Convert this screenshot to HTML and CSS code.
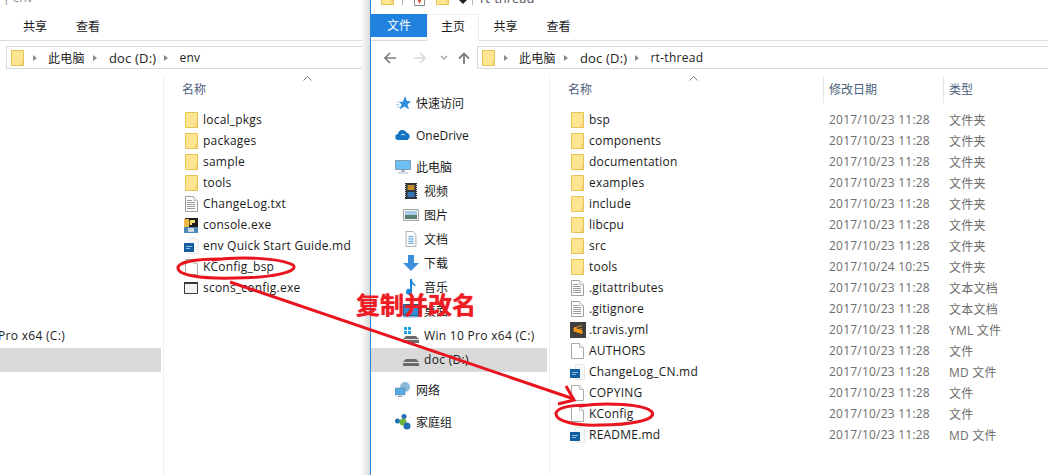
FILE: index.html
```html
<!DOCTYPE html>
<html lang="zh-CN">
<head>
    <meta charset="UTF-8">
    <title>rt-thread</title>
    <link rel="stylesheet" href="styles.css">
</head>
<body>

    <svg width="0" height="0" class="defs">
        <symbol id="folder" viewBox="0 0 18 18">
            <path d="M1.500 1.500h12v15h-12z" fill="#fde592" stroke="#e8c351"/>
            <path d="M12 12.500h1.500v4h-1.500z" fill="#fff6d2" stroke="#e8c351"/>
        </symbol>
        <symbol id="blank" viewBox="0 0 18 18">
            <path d="M1.500 1.500h8l4 4v11h-12z" fill="#fff" stroke="#a9a9a9"/>
            <path d="M9.500 1.500v4h4" fill="#f0f0f0" stroke="#c4c4c4"/>
        </symbol>
        <symbol id="text" viewBox="0 0 18 18">
            <path d="M1.500 1.500h8l4 4v11h-12z" fill="#fff" stroke="#a0a0a0"/>
            <path d="M9.500 1.500v4h4" fill="#f0f0f0" stroke="#c4c4c4"/>
            <path d="M3 5.500h5M3 7.500h8M3 9.500h8M3 11.500h8M3 13.500h8" stroke="#9a9a9a"/>
        </symbol>
        <symbol id="md" viewBox="0 0 18 18">
            <path d="M5.500 1.500h7l2 2v13h-9z" fill="#f8f8f8" stroke="#e8e8e8"/>
            <path d="M0 6h10v9h-10z" fill="#12609f"/>
            <path d="M2 9h6v1h-6zM2 11h4v1h-4z" fill="#8cbde3"/>
        </symbol>
    </svg>

    <!-- left window -->
    <section class="window window-left">
        <div class="titlebar"><span class="title">| env</span></div>
        <div class="tabs">
            <span class="tab">共享</span>
            <span class="tab">查看</span>
        </div>
        <div class="navbar">
            <div class="address">
                <svg class="addr-icon"><use href="#folder"/></svg>
                <span class="crumb-sep"></span><span>此电脑</span>
                <span class="crumb-sep"></span><span class="crumb-doc">doc (D:)</span>
                <span class="crumb-sep"></span><span>env</span>
            </div>
        </div>
        <div class="body">
            <div class="sidebar">
                <div class="side-row side-cut latin">Pro x64 (C:)</div>
                <div class="side-row side-selected"></div>
            </div>
            <div class="files">
                <div class="head">
                    <div class="col-name">名称<svg class="sort" viewBox="0 0 9 5"><path d="M.5 4.500l4-4 4 4" fill="none" stroke="#808080"/></svg></div>
                </div>
                <div class="row"><svg class="icon"><use href="#folder"/></svg>local_pkgs</div>
                <div class="row"><svg class="icon"><use href="#folder"/></svg>packages</div>
                <div class="row"><svg class="icon"><use href="#folder"/></svg>sample</div>
                <div class="row"><svg class="icon"><use href="#folder"/></svg>tools</div>
                <div class="row"><svg class="icon"><use href="#text"/></svg>ChangeLog.txt</div>
                <div class="row">
                    <svg class="icon" viewBox="0 0 18 18">
                        <path d="M1 2h13v10h-13z" fill="#1c1c1c"/>
                        <path d="M0 3h5q1 4 0 8h-5z" fill="#e9b949"/>
                        <path d="M6 4h5v3h-3v2h-2z" fill="#f6d766"/>
                        <path d="M0 11h14v6h-14z" fill="#4d87b8"/>
                        <path d="M4 12h6v4h-6z" fill="#c7d7e4"/>
                    </svg>console.exe
                </div>
                <div class="row"><svg class="icon"><use href="#md"/></svg>env Quick Start Guide.md</div>
                <div class="row"><svg class="icon"><use href="#blank"/></svg>KConfig_bsp</div>
                <div class="row">
                    <svg class="icon" viewBox="0 0 18 18">
                        <path d="M.5 3.500h13v11h-13z" fill="#f4f4f4" stroke="#3a3a3a"/>
                        <path d="M0 3h14v2h-14z" fill="#3a3a3a"/>
                    </svg>scons_config.exe
                </div>
            </div>
        </div>
    </section>

    <!-- right window -->
    <section class="window window-right">
        <div class="titlebar">
            <svg class="qa"><use href="#folder"/></svg>
            <span class="qa-line"></span>
            <svg class="qa-check" viewBox="0 0 11 6">
                <path d="M.5 0v5.500h10v-5.500" fill="#fff" stroke="#8a8a8a"/>
                <path d="M3.500 0l2 4 2-4z" fill="#d9593d"/>
            </svg>
            <svg class="qa"><use href="#folder"/></svg>
            <span class="qa-drop"></span>
            <span class="qa-line qa-line-last"></span>
            <span class="title">rt-thread</span>
        </div>
        <div class="tabs">
            <span class="tab tab-file">文件</span>
            <span class="tab tab-home">主页</span>
            <span class="tab">共享</span>
            <span class="tab">查看</span>
        </div>
        <div class="navbar">
            <svg class="nav-icon" viewBox="0 0 12 12"><path d="M12 6h-10M6 1l-5 5 5 5" fill="none" stroke="#7d7d7d" stroke-width="1.600"/></svg>
            <svg class="nav-icon nav-fwd" viewBox="0 0 12 12"><path d="M0 6h10M6 1l5 5-5 5" fill="none" stroke="#d8d8d8" stroke-width="1.600"/></svg>
            <svg class="nav-drop" viewBox="0 0 8 5"><path d="M1 1l3 3 3-3" fill="none" stroke="#9a9a9a" stroke-width="1.200"/></svg>
            <svg class="nav-icon nav-up" viewBox="0 0 12 12"><path d="M6 12v-10M1 6.500l5-5 5 5" fill="none" stroke="#7d7d7d" stroke-width="1.800"/></svg>
            <div class="address">
                <svg class="addr-icon"><use href="#folder"/></svg>
                <span class="crumb-sep"></span><span>此电脑</span>
                <span class="crumb-sep"></span><span class="crumb-doc">doc (D:)</span>
                <span class="crumb-sep"></span><span>rt-thread</span>
            </div>
        </div>
        <div class="body">
            <div class="sidebar">
                <div class="side-row top">
                    <svg class="side-icon" viewBox="0 0 16 16"><path d="M10 1l2 5h4l-3.500 3.500 1.500 5-4.500-3-5 3 2-5-2-2.500 3.500-.5z" fill="#2f8fdc"/><path d="M2 7h3M1 9.500h3M2 12h3" stroke="#9cc7ea"/></svg>
                    快速访问
                </div>
                <div class="side-row top">
                    <svg class="side-icon" viewBox="0 0 16 12"><path d="M3.500 11a3 3 0 0 1-.5-6 4.500 4.500 0 0 1 8.500-1.500 4 4 0 0 1 1 7.500z" fill="#1374c4"/><path d="M6 6q2-1.500 4 0" fill="none" stroke="#fff" stroke-width=".8"/></svg>
                    OneDrive
                </div>
                <div class="side-row pc">
                    <svg class="side-icon" viewBox="0 0 16 16"><path d="M.5 1.500h15v9h-15z" fill="#6cc0f5" stroke="#7f9db3"/><path d="M6 11h4v2h-4zM3 13.500h10v1h-10z" fill="#a8bccb"/></svg>
                    此电脑
                </div>
                <div class="side-row sub">
                    <svg class="side-icon" viewBox="0 0 16 16"><path d="M2 0h12v16h-12z" fill="#30343c"/><path d="M4.500 2h7v5h-7z" fill="#c98b2e"/><path d="M4.500 9h7v5h-7z" fill="#3273b5"/><path d="M2.500 1v14M13.500 1v14" stroke="#d0d0d0" stroke-dasharray="1 1"/></svg>
                    视频
                </div>
                <div class="side-row sub">
                    <svg class="side-icon" viewBox="0 0 16 14"><path d="M.5 1.500h15v11h-15z" fill="#f2f2f2" stroke="#a5a5a5"/><path d="M2 3h12v4h-12z" fill="#a8cbe6"/><path d="M2 7h12v4h-12z" fill="#56806f"/></svg>
                    图片
                </div>
                <div class="side-row sub">
                    <svg class="side-icon" viewBox="0 0 16 18"><path d="M2.500 .5h8l3 3v14h-11z" fill="#fff" stroke="#a5a5a5"/><path d="M5 6h6M5 8h6M5 10h6M5 12h6M5 14h6" stroke="#5e9fd2"/></svg>
                    文档
                </div>
                <div class="side-row sub">
                    <svg class="side-icon" viewBox="0 0 16 16"><path d="M5 0h6v8h5l-8 8-8-8h5z" fill="#3d8edb"/></svg>
                    下载
                </div>
                <div class="side-row sub">
                    <svg class="side-icon" viewBox="0 0 16 16"><path d="M7 0h2q0 4 4 6l-1 1q-2-1-3-2v8a3 3 0 1 1-2-3z" fill="#1b87d9"/></svg>
                    音乐
                </div>
                <div class="side-row sub">
                    <svg class="side-icon" viewBox="0 0 16 14"><path d="M.5 .5h15v11h-15z" fill="#2f8fdc" stroke="#165b8f"/><path d="M0 12h16v1.500h-16z" fill="#7fb4de"/></svg>
                    桌面
                </div>
                <div class="side-row sub latin">
                    <svg class="side-icon" viewBox="0 0 16 16"><path d="M1 0h3v3h-3zM5 0h3v3h-3zM1 4h3v3h-3zM5 4h3v3h-3z" fill="#15a7ea"/><path d="M3 9h10l3 3v4h-16v-4z" fill="#6b6b6b"/><path d="M0 12h16v1h-16z" fill="#e3e3e3"/></svg>
                    Win 10 Pro x64 (C:)
                </div>
                <div class="side-row sub latin side-selected">
                    <svg class="side-icon" viewBox="0 0 16 16"><path d="M3 8h10l3 3v4h-16v-4z" fill="#6b6b6b"/><path d="M0 11h16v1h-16z" fill="#e3e3e3"/></svg>
                    doc (D:)
                </div>
                <div class="side-row top net">
                    <svg class="side-icon" viewBox="0 0 16 16"><circle cx="10" cy="5" r="5" fill="#8ab9dc"/><path d="M0 6h10v7h-10z" fill="#56a8e3" stroke="#6d8aa0" stroke-width=".6"/><path d="M3 14h4v1h-4z" fill="#8aa0b0"/></svg>
                    网络
                </div>
                <div class="side-row top">
                    <svg class="side-icon" viewBox="0 0 16 16"><circle cx="2.500" cy="7" r="2.500" fill="#1f6db5"/><circle cx="9" cy="2.500" r="2.500" fill="#1f6db5"/><circle cx="8" cy="8" r="3.500" fill="#6fb63f"/><circle cx="12" cy="12" r="3.500" fill="#1f6db5"/></svg>
                    家庭组
                </div>
            </div>
            <div class="files">
                <div class="head">
                    <div class="col-name">名称<svg class="sort" viewBox="0 0 9 5"><path d="M.5 4.500l4-4 4 4" fill="none" stroke="#808080"/></svg></div>
                    <div class="col-date">修改日期</div>
                    <div class="col-type">类型</div>
                </div>
                <div class="row"><svg class="icon"><use href="#folder"/></svg><span class="name">bsp</span><span class="date">2017/10/23 11:28</span><span class="type">文件夹</span></div>
                <div class="row"><svg class="icon"><use href="#folder"/></svg><span class="name">components</span><span class="date">2017/10/23 11:28</span><span class="type">文件夹</span></div>
                <div class="row"><svg class="icon"><use href="#folder"/></svg><span class="name">documentation</span><span class="date">2017/10/23 11:28</span><span class="type">文件夹</span></div>
                <div class="row"><svg class="icon"><use href="#folder"/></svg><span class="name">examples</span><span class="date">2017/10/23 11:28</span><span class="type">文件夹</span></div>
                <div class="row"><svg class="icon"><use href="#folder"/></svg><span class="name">include</span><span class="date">2017/10/23 11:28</span><span class="type">文件夹</span></div>
                <div class="row"><svg class="icon"><use href="#folder"/></svg><span class="name">libcpu</span><span class="date">2017/10/23 11:28</span><span class="type">文件夹</span></div>
                <div class="row"><svg class="icon"><use href="#folder"/></svg><span class="name">src</span><span class="date">2017/10/23 11:28</span><span class="type">文件夹</span></div>
                <div class="row"><svg class="icon"><use href="#folder"/></svg><span class="name">tools</span><span class="date">2017/10/24 10:25</span><span class="type">文件夹</span></div>
                <div class="row"><svg class="icon"><use href="#text"/></svg><span class="name">.gitattributes</span><span class="date">2017/10/23 11:28</span><span class="type">文本文档</span></div>
                <div class="row"><svg class="icon"><use href="#text"/></svg><span class="name">.gitignore</span><span class="date">2017/10/23 11:28</span><span class="type">文本文档</span></div>
                <div class="row">
                    <svg class="icon" viewBox="0 0 18 18"><path d="M0 1h16v16h-16z" fill="#3f3f3f"/><path d="M12 4.500l-8 2.500v3l8 2.500v-3l-8-2.500M4 10l8-2.500" fill="#f59a1d" stroke="#f59a1d"/></svg>
                    <span class="name">.travis.yml</span><span class="date">2017/10/23 11:28</span><span class="type">YML 文件</span>
                </div>
                <div class="row"><svg class="icon"><use href="#blank"/></svg><span class="name">AUTHORS</span><span class="date">2017/10/23 11:28</span><span class="type">文件</span></div>
                <div class="row"><svg class="icon"><use href="#md"/></svg><span class="name">ChangeLog_CN.md</span><span class="date">2017/10/23 11:28</span><span class="type">MD 文件</span></div>
                <div class="row"><svg class="icon"><use href="#blank"/></svg><span class="name">COPYING</span><span class="date">2017/10/23 11:28</span><span class="type">文件</span></div>
                <div class="row"><svg class="icon"><use href="#blank"/></svg><span class="name">KConfig</span><span class="date">2017/10/23 11:28</span><span class="type">文件</span></div>
                <div class="row"><svg class="icon"><use href="#md"/></svg><span class="name">README.md</span><span class="date">2017/10/23 11:28</span><span class="type">MD 文件</span></div>
            </div>
        </div>
    </section>

    <!-- hand drawn marks on top of both windows -->
    <svg class="marks" viewBox="0 0 1048 475">
        <g fill="none" stroke="#e8141f" stroke-width="3">
            <path d="M212 260C240 256 280 258 293 265C300 272 270 278 235 278C200 279 178 275 178 268C178 262 195 259 220 259"/>
            <path d="M580 406C605 402 645 404 652 412C657 420 630 425 600 425C575 426 556 421 556 414C556 408 568 405 590 405"/>
            <path d="M230 282L574 399"/>
            <path d="M566 386L574 400L558 404"/>
        </g>
    </svg>
    <div class="label">复制并改名</div>

</body>
</html>
```

FILE: styles.css
```css
* {
    box-sizing: border-box;
}

html, body {
    margin: 0;
    height: 100%;
    overflow: hidden;
}

body {
    position: relative;
    width: 1048px;
    height: 475px;
    background: white;
    font-family: "Open Sans", "Noto Sans CJK SC", sans-serif;
    font-size: 12px;
    color: #1a1a1a;
}

.defs {
    position: absolute;
}

.window {
    position: absolute;
    top: 0;
    height: 475px;
    background: white;
}

.window-left {
    left: 0;
    width: 362px;
    overflow: hidden;
}

.window-right {
    left: 370px;
    width: 678px;
    border-left: 1px solid #2b87de;
}

.window-right::before {
    content: "";
    position: absolute;
    left: -11px;
    top: 0;
    width: 10px;
    height: 475px;
    background: linear-gradient(to right, rgba(0, 0, 0, 0), rgba(0, 0, 0, 0.14));
}

/* title strip, cut off by the top of the shot */
.titlebar {
    height: 14px;
    display: flex;
    align-items: flex-start;
    overflow: hidden;
    color: #666;
}

.title {
    line-height: 12px;
    margin: -8px 0 0 3px;
    color: #888;
    white-space: nowrap;
}

.window-right .titlebar {
    padding-left: 9px;
}

.window-right .title {
    margin: -8px 0 0 7px;
    color: #555;
    font-size: 13px;
}

.qa {
    width: 18px;
    height: 18px;
    margin-top: -12px;
    flex: none;
}

.qa-check {
    width: 11px;
    height: 6px;
    margin: 0 10px 0 0;
    flex: none;
}

.qa-line {
    width: 1px;
    height: 5px;
    background: #bbb;
    margin: 0 11px 0 4px;
}

.qa-line-last {
    margin: 0 0 0 5px;
}

.qa-drop {
    width: 8px;
    height: 4px;
    margin-left: 6px;
    background: #222;
    clip-path: polygon(0 0, 100% 0, 50% 100%);
}

.tabs {
    height: 27px;
    display: flex;
    border-bottom: 1px solid #dadada;
    padding-left: 23px;
    gap: 29px;
    line-height: 26px;
}

.window-right .tabs {
    padding-left: 0;
    gap: 0;
}

.window-right .tab {
    width: 53px;
    text-align: center;
}

.window-right .tab-file {
    width: 56px;
    height: 23px;
    line-height: 23px;
    background: #2182de;
    color: white;
}

.window-right .tab-home {
    width: 52px;
    height: 27px;
    border: 1px solid #eee;
    border-bottom: 1px solid white;
    line-height: 24px;
}

.navbar {
    display: flex;
    align-items: center;
    height: 35px;
    padding: 5px 0 7px 6px;
}

.window-right .navbar {
    padding-left: 13px;
}

.nav-icon {
    width: 12px;
    height: 12px;
    flex: none;
}

.nav-fwd {
    margin-left: 18px;
}

.nav-drop {
    width: 8px;
    height: 5px;
    margin-left: 14px;
    flex: none;
}

.nav-up {
    margin: 0 7px 0 10px;
}

.address {
    flex: 1;
    height: 23px;
    display: flex;
    align-items: center;
    border: 1px solid #d9d9d9;
    border-right: none;
    padding-left: 3px;
    color: #222;
    letter-spacing: 0.3px;
}

.addr-icon {
    width: 18px;
    height: 18px;
    margin-right: -3px;
    flex: none;
}

.crumb-sep {
    width: 0;
    height: 0;
    margin: 0 8px;
    border: 3px solid transparent;
    border-left: 4px solid #8a8a8a;
}

.crumb-doc {
    margin-left: 1px;
    font-size: 13px;
    letter-spacing: 0.2px;
}

.body {
    display: flex;
    height: 399px;
}

.sidebar {
    width: 164px;
    flex: none;
    padding-top: 248px;
    border-right: 1px solid #f0f0f0;
    height: 100%;
    overflow: hidden;
}

.window-right .sidebar {
    width: 179px;
    padding-top: 12px;
}

.side-row {
    height: 24px;
    display: flex;
    align-items: center;
    white-space: nowrap;
    margin-right: 2px;
    padding-bottom: 2px;
}

.side-row.top {
    height: 32px;
    padding-left: 24px;
}

.side-row.pc {
    margin-top: 4px;
    padding-left: 24px;
}

.side-row.sub {
    padding-left: 32px;
}

.side-row.net {
    margin-top: 3px;
}

.latin {
    letter-spacing: 0.3px;
}

.side-icon {
    width: 16px;
    height: 16px;
    margin-right: 5px;
    flex: none;
}

.side-cut {
    margin-left: -2px;
}

.side-selected {
    background: #d9d9d9;
}

.files {
    flex: 1;
    padding-left: 20px;
}

.head {
    display: flex;
    height: 33px;
    margin-left: -2px;
    color: #4c607a;
    line-height: 27px;
}

.col-name {
    position: relative;
    width: 255px;
}

.sort {
    position: absolute;
    left: 121px;
    top: 0;
    width: 9px;
    height: 5px;
}

.col-date {
    width: 120px;
    padding-left: 5px;
    border-left: 1px solid #e5e5e5;
    height: 27px;
}

.col-type {
    padding-left: 5px;
    border-left: 1px solid #e5e5e5;
    height: 27px;
}

.row {
    height: 21px;
    display: flex;
    align-items: center;
    white-space: nowrap;
    letter-spacing: 0.22px;
}

.icon {
    width: 18px;
    height: 18px;
    margin-right: 1px;
    flex: none;
}

.name {
    width: 240px;
}

.date {
    width: 120px;
    color: #6d6d6d;
}

.type {
    color: #6d6d6d;
}

/* annotations */
.marks {
    position: absolute;
    left: 0;
    top: 0;
    width: 1048px;
    height: 475px;
    pointer-events: none;
}

.label {
    position: absolute;
    left: 356px;
    top: 289px;
    color: #ee1c25;
    font-size: 24px;
    line-height: 30px;
    font-weight: 700;
    font-family: "Noto Sans CJK SC", sans-serif;
    text-shadow: 0 0 1px #ee1c25;
}
```
